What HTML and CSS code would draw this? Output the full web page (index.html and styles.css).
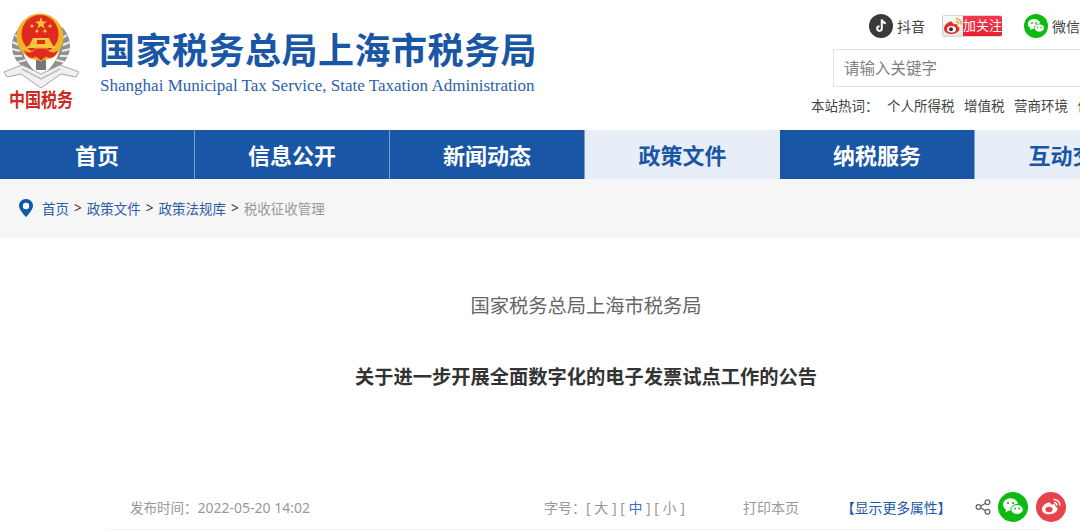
FILE: index.html
```html
<!DOCTYPE html>
<html lang="zh-CN">
<head>
    <meta charset="UTF-8">
    <title>国家税务总局上海市税务局</title>
    <link rel="stylesheet" href="styles.css">
</head>
<body>
    <div class="page">
        <header class="site-header">
            <div class="logo">
                <svg class="emblem" width="84" height="80" viewBox="0 0 84 80">
                    <path d="M20 17 C9 28 9 46 22 56 L35 61 C23 50 18 34 24 17 Z" fill="#8f9191"/>
                    <path d="M62 17 C73 28 73 46 60 56 L47 61 C59 50 64 34 58 17 Z" fill="#8f9191"/>
                    <path d="M15 25 L21 29 M12 32 L19 35 M12 39 L20 41 M14 46 L22 46 M18 52 L26 50 M67 25 L61 29 M70 32 L63 35 M70 39 L62 41 M68 46 L60 46 M64 52 L56 50" stroke="#ececec" stroke-width="2"/>
                    <rect x="36" y="48" width="10" height="12" fill="#777"/>
                    <path d="M4 62 L22 55 L41 64 L60 55 L79 62 L76 67 L61 64 L41 78 L21 64 L7 67 Z" fill="#f0f0f0" stroke="#a5a5a5" stroke-width="1"/>
                    <path d="M22 59 L41 69 L60 59" fill="none" stroke="#bcbcbc" stroke-width="1.500"/>
                    <circle cx="40" cy="27" r="23.500" fill="#efb32b"/>
                    <ellipse cx="40" cy="24" rx="18.500" ry="19" fill="#e02a20"/>
                    <polygon points="41,7 42.500,11.500 47,11.500 43.400,14.300 44.700,18.800 41,16 37.300,18.800 38.600,14.300 35,11.500 39.500,11.500" fill="#f5c63a"/>
                    <circle cx="32" cy="16" r="1.600" fill="#f5c63a"/>
                    <circle cx="50" cy="16" r="1.600" fill="#f5c63a"/>
                    <circle cx="37" cy="21" r="1.600" fill="#f5c63a"/>
                    <circle cx="45" cy="21" r="1.600" fill="#f5c63a"/>
                    <path d="M29 36 L33 28 H49 L53 36 H55 V38 H27 V36 Z" fill="#f5c63a"/>
                    <rect x="37" y="30" width="8" height="4" fill="#e02a20"/>
                    <path d="M23 39 C28 44 33 42 36 38 H46 C49 42 54 44 59 39 C56 48 50 50 46 47 L41 51 L36 47 C32 50 26 48 23 39 Z" fill="#e02a20" stroke="#efb32b" stroke-width="1"/>
                </svg>
                <div class="logo-mark">中国税务</div>
            </div>
            <div class="site-title">
                <h1>国家税务总局上海市税务局</h1>
                <p>Shanghai Municipal Tax Service, State Taxation Administration</p>
            </div>
            <div class="header-side">
                <div class="social-row">
                    <a class="social-link">
                        <svg width="24" height="24" viewBox="0 0 24 24">
                            <circle cx="12" cy="12" r="12" fill="#3a3a3a"/>
                            <path d="M12.800 5.500 V14.600 A2.300 2.300 0 1 1 10.500 12.300 M12.800 5.500 C13.200 7.700 14.600 9 16.800 9.200" fill="none" stroke="#fff" stroke-width="2"/>
                        </svg>
                        抖音
                    </a>
                    <a class="follow-btn">
                        <span class="follow-icon">
                            <svg width="20" height="18" viewBox="0 0 20 18">
                                <path d="M7.500 4.500 C3.500 5.500 1 9 1 12 C1 15 5 17 8.500 17 C13 17 16.500 14.500 16.500 11.800 C16.500 10.400 15.300 9.800 14.400 9.500 C15 7.600 14 6.600 11.500 7.300 C10 7.800 9.800 4 7.500 4.500 Z" fill="#de2f2a"/>
                                <ellipse cx="8.500" cy="12.200" rx="4.400" ry="3.200" fill="#fff"/>
                                <circle cx="8" cy="12.200" r="2" fill="#333"/>
                                <path d="M12.500 1.500 A5.500 5.500 0 0 1 18.300 7.500 M12.800 4.300 A2.800 2.800 0 0 1 15.700 7" fill="none" stroke="#f2a02c" stroke-width="1.500"/>
                            </svg>
                        </span>
                        <span class="follow-text">加关注</span>
                    </a>
                    <a class="social-link">
                        <svg width="24" height="24" viewBox="0 0 24 24">
                            <circle cx="12" cy="12" r="12" fill="#0dbb0f"/>
                            <ellipse cx="10" cy="10" rx="6.200" ry="5" fill="#fff"/>
                            <path d="M6.500 13 L6 16 L9 14.500 Z" fill="#fff"/>
                            <ellipse cx="15.300" cy="14" rx="5" ry="4" fill="#fff" stroke="#0dbb0f" stroke-width="0.800"/>
                            <circle cx="8" cy="9" r="0.900" fill="#0dbb0f"/>
                            <circle cx="12" cy="9" r="0.900" fill="#0dbb0f"/>
                            <circle cx="13.600" cy="13.300" r="0.700" fill="#0dbb0f"/>
                            <circle cx="17" cy="13.300" r="0.700" fill="#0dbb0f"/>
                        </svg>
                        微信
                    </a>
                </div>
                <div class="search-box">请输入关键字</div>
                <div class="hot-words">
                    <span class="hot-label">本站热词：</span>
                    <a>个人所得税</a>
                    <a>增值税</a>
                    <a>营商环境</a>
                    <a>优惠政策</a>
                </div>
            </div>
        </header>

        <nav class="main-nav">
            <a>首页</a>
            <a>信息公开</a>
            <a>新闻动态</a>
            <a class="light">政策文件</a>
            <a>纳税服务</a>
            <a class="light">互动交流</a>
        </nav>

        <div class="crumbs">
            <svg width="16" height="20" viewBox="0 0 16 20">
                <path d="M8 1 C3.800 1 1 4 1 7.800 C1 12.500 8 19 8 19 C8 19 15 12.500 15 7.800 C15 4 12.200 1 8 1 Z" fill="#0f5aa8"/>
                <circle cx="8" cy="8" r="3.200" fill="#fff"/>
            </svg>
            <a>首页</a><span class="sep">&gt;</span>
            <a>政策文件</a><span class="sep">&gt;</span>
            <a>政策法规库</a><span class="sep">&gt;</span>
            <span class="current">税收征收管理</span>
        </div>

        <main class="article">
            <div class="article-org">国家税务总局上海市税务局</div>
            <h2 class="article-title">关于进一步开展全面数字化的电子发票试点工作的公告</h2>
            <div class="article-meta">
                <span class="pub-time"><span class="pub-label">发布时间：</span>2022-05-20 14:02</span>
                <span class="font-size">字号：[ 大 ] [ <b>中</b> ] [ 小 ]</span>
                <span class="print">打印本页</span>
                <a class="more-props">【显示更多属性】</a>
                <svg class="share-icon" width="16" height="16" viewBox="0 0 16 16">
                    <path d="M4 8 L12 3.500 M4 8 L12 12.500" stroke="#666" stroke-width="1.300"/>
                    <circle cx="3.500" cy="8" r="2.400" fill="#fff" stroke="#666" stroke-width="1.300"/>
                    <circle cx="12.500" cy="3.200" r="2.400" fill="#fff" stroke="#666" stroke-width="1.300"/>
                    <circle cx="12.500" cy="12.800" r="2.400" fill="#fff" stroke="#666" stroke-width="1.300"/>
                </svg>
                <svg class="share-wx" width="30" height="30" viewBox="0 0 30 30">
                    <circle cx="15" cy="15" r="15" fill="#0dbb0f"/>
                    <ellipse cx="12.500" cy="12.500" rx="7.500" ry="6.200" fill="#fff"/>
                    <path d="M8 16.500 L7.500 20.500 L11.500 18 Z" fill="#fff"/>
                    <ellipse cx="19" cy="17.500" rx="6.200" ry="5" fill="#fff" stroke="#0dbb0f"/>
                    <circle cx="10" cy="11" r="1.100" fill="#0dbb0f"/>
                    <circle cx="15" cy="11" r="1.100" fill="#0dbb0f"/>
                    <circle cx="17" cy="16.500" r="0.900" fill="#0dbb0f"/>
                    <circle cx="21" cy="16.500" r="0.900" fill="#0dbb0f"/>
                </svg>
                <svg class="share-wb" width="30" height="30" viewBox="0 0 30 30">
                    <circle cx="15" cy="15" r="15" fill="#e8434a"/>
                    <path d="M12.500 10.500 C8.500 11.500 5.500 15 6 18 C6.500 21 10 22.500 13.500 22.300 C18 22 22 19.500 21.500 16.500 C21.300 15.300 20 14.800 19.300 14.600 C20 12.800 18.800 11.800 16.300 12.600 C15 13 14.500 10.200 12.500 10.500 Z" fill="#fff"/>
                    <ellipse cx="13" cy="17.500" rx="3.600" ry="2.800" fill="#e8434a"/>
                    <path d="M17.500 7.500 A6 6 0 0 1 24 13.500 M18 10.500 A3 3 0 0 1 21 13.500" fill="none" stroke="#fff" stroke-width="1.400"/>
                </svg>
            </div>
        </main>
    </div>
</body>
</html>
```

FILE: styles.css
```css
html, body {
    margin: 0;
    padding: 0;
    background: #fff;
}
body {
    font-family: "Noto Sans", "Noto Sans CJK SC", sans-serif;
    color: #333;
}
.page {
    width: 1080px;
    height: 530px;
    overflow: hidden;
}
.site-header {
    display: flex;
    height: 130px;
}
.logo {
    width: 99px;
    flex-shrink: 0;
    padding-top: 10px;
    box-sizing: border-box;
}
.emblem {
    display: block;
}
.logo-mark {
    width: 76px;
    margin-top: -3px;
    padding-left: 9px;
    box-sizing: border-box;
    font-family: "Noto Sans CJK SC", sans-serif;
    font-size: 16px;
    font-weight: 700;
    line-height: 24px;
    color: #cb2a24;
    white-space: nowrap;
    transform: scaleY(1.2);
}
.site-title {
    width: 712px;
    flex-shrink: 0;
    padding-top: 25px;
    box-sizing: border-box;
}
.site-title h1 {
    margin: 0;
    font-family: "Noto Sans CJK SC", sans-serif;
    font-size: 36px;
    font-weight: 700;
    line-height: 46px;
    letter-spacing: 0.5px;
    color: #1a56a6;
    white-space: nowrap;
}
.site-title p {
    margin: 4px 0 0 1px;
    font-family: "Liberation Serif", serif;
    font-size: 17.050px;
    line-height: 22px;
    color: #2a62ac;
    white-space: nowrap;
}
.header-side {
    width: 269px;
    flex-shrink: 0;
    padding-top: 14px;
    box-sizing: border-box;
    overflow: hidden;
}
.social-row {
    display: flex;
    align-items: center;
    height: 24px;
    padding-left: 58px;
}
.social-link {
    display: flex;
    align-items: center;
    gap: 4px;
    font-size: 14px;
    color: #444;
    white-space: nowrap;
}
.follow-btn {
    display: flex;
    width: 60px;
    height: 22px;
    margin: 0 22px 0 17px;
    flex-shrink: 0;
    box-sizing: border-box;
    border: 1px solid #d8d8d8;
    border-left-color: #ccc;
    border-right: 0;
    border-radius: 2px;
    overflow: hidden;
}
.follow-icon {
    width: 20px;
    background: linear-gradient(#fafafa, #e4e4e4);
    display: flex;
    align-items: center;
    justify-content: center;
}
.follow-text {
    flex: 1;
    background: linear-gradient(#f23a4c, #e61f33);
    color: #fff;
    font-size: 13px;
    line-height: 19px;
    text-align: center;
}
.search-box {
    width: 300px;
    height: 38px;
    margin: 11px 0 0 22px;
    box-sizing: border-box;
    border: 1px solid #e3e3e3;
    padding-left: 10px;
    font-size: 15.500px;
    line-height: 37px;
    color: #808080;
}
.hot-words {
    display: flex;
    margin-top: 7px;
    font-size: 13.500px;
    line-height: 24px;
    color: #444;
    white-space: nowrap;
}
.hot-label {
    width: 76px;
    flex-shrink: 0;
}
.hot-words a {
    margin-right: 9.500px;
    flex-shrink: 0;
}
.main-nav {
    display: flex;
    height: 49px;
    background: #1a56a6;
}
.main-nav a {
    width: 195px;
    flex-shrink: 0;
    box-sizing: border-box;
    border-right: 1px solid #7fa0cc;
    text-align: center;
    font-family: "Noto Sans CJK SC", sans-serif;
    font-size: 22px;
    font-weight: 700;
    line-height: 48px;
    color: #fff;
}
.main-nav a.light {
    background: #e8eef7;
    border-right: 0;
    color: #1a56a6;
}
.crumbs {
    display: flex;
    align-items: center;
    height: 59px;
    padding-left: 18px;
    padding-bottom: 2px;
    box-sizing: border-box;
    background: #f6f6f6;
    font-size: 13.500px;
    color: #2f5ca5;
}
.crumbs svg {
    margin-right: 8px;
}
.crumbs .sep {
    margin: 0 5px;
    color: #333;
}
.crumbs .current {
    color: #999;
}
.article {
    width: 952px;
    margin-left: 110px;
}
.article-org {
    margin-top: 54px;
    text-align: center;
    font-size: 19.250px;
    line-height: 28px;
    color: #666;
}
.article-title {
    margin: 43px 0 0;
    text-align: center;
    font-size: 19.250px;
    font-weight: 700;
    line-height: 28px;
    color: #333;
}
.article-meta {
    display: flex;
    align-items: center;
    width: 928px;
    height: 45px;
    margin-top: 94px;
    border-bottom: 1px solid #eee;
    box-sizing: border-box;
    font-size: 14px;
    color: #999;
}
.pub-time {
    margin-left: 20px;
    width: 414px;
    flex-shrink: 0;
    white-space: nowrap;
}
.pub-label {
    font-size: 13.500px;
}
.font-size {
    width: 199px;
    flex-shrink: 0;
    white-space: nowrap;
}
.font-size b {
    font-weight: 400;
    color: #3a72bd;
}
.print {
    width: 98px;
    flex-shrink: 0;
}
.more-props {
    width: 134px;
    flex-shrink: 0;
    font-size: 13.800px;
    color: #1a56a6;
}
.share-icon {
    margin-right: 7px;
    flex-shrink: 0;
}
.share-wx {
    margin-right: 8px;
    flex-shrink: 0;
}
.share-wb {
    flex-shrink: 0;
}
```
